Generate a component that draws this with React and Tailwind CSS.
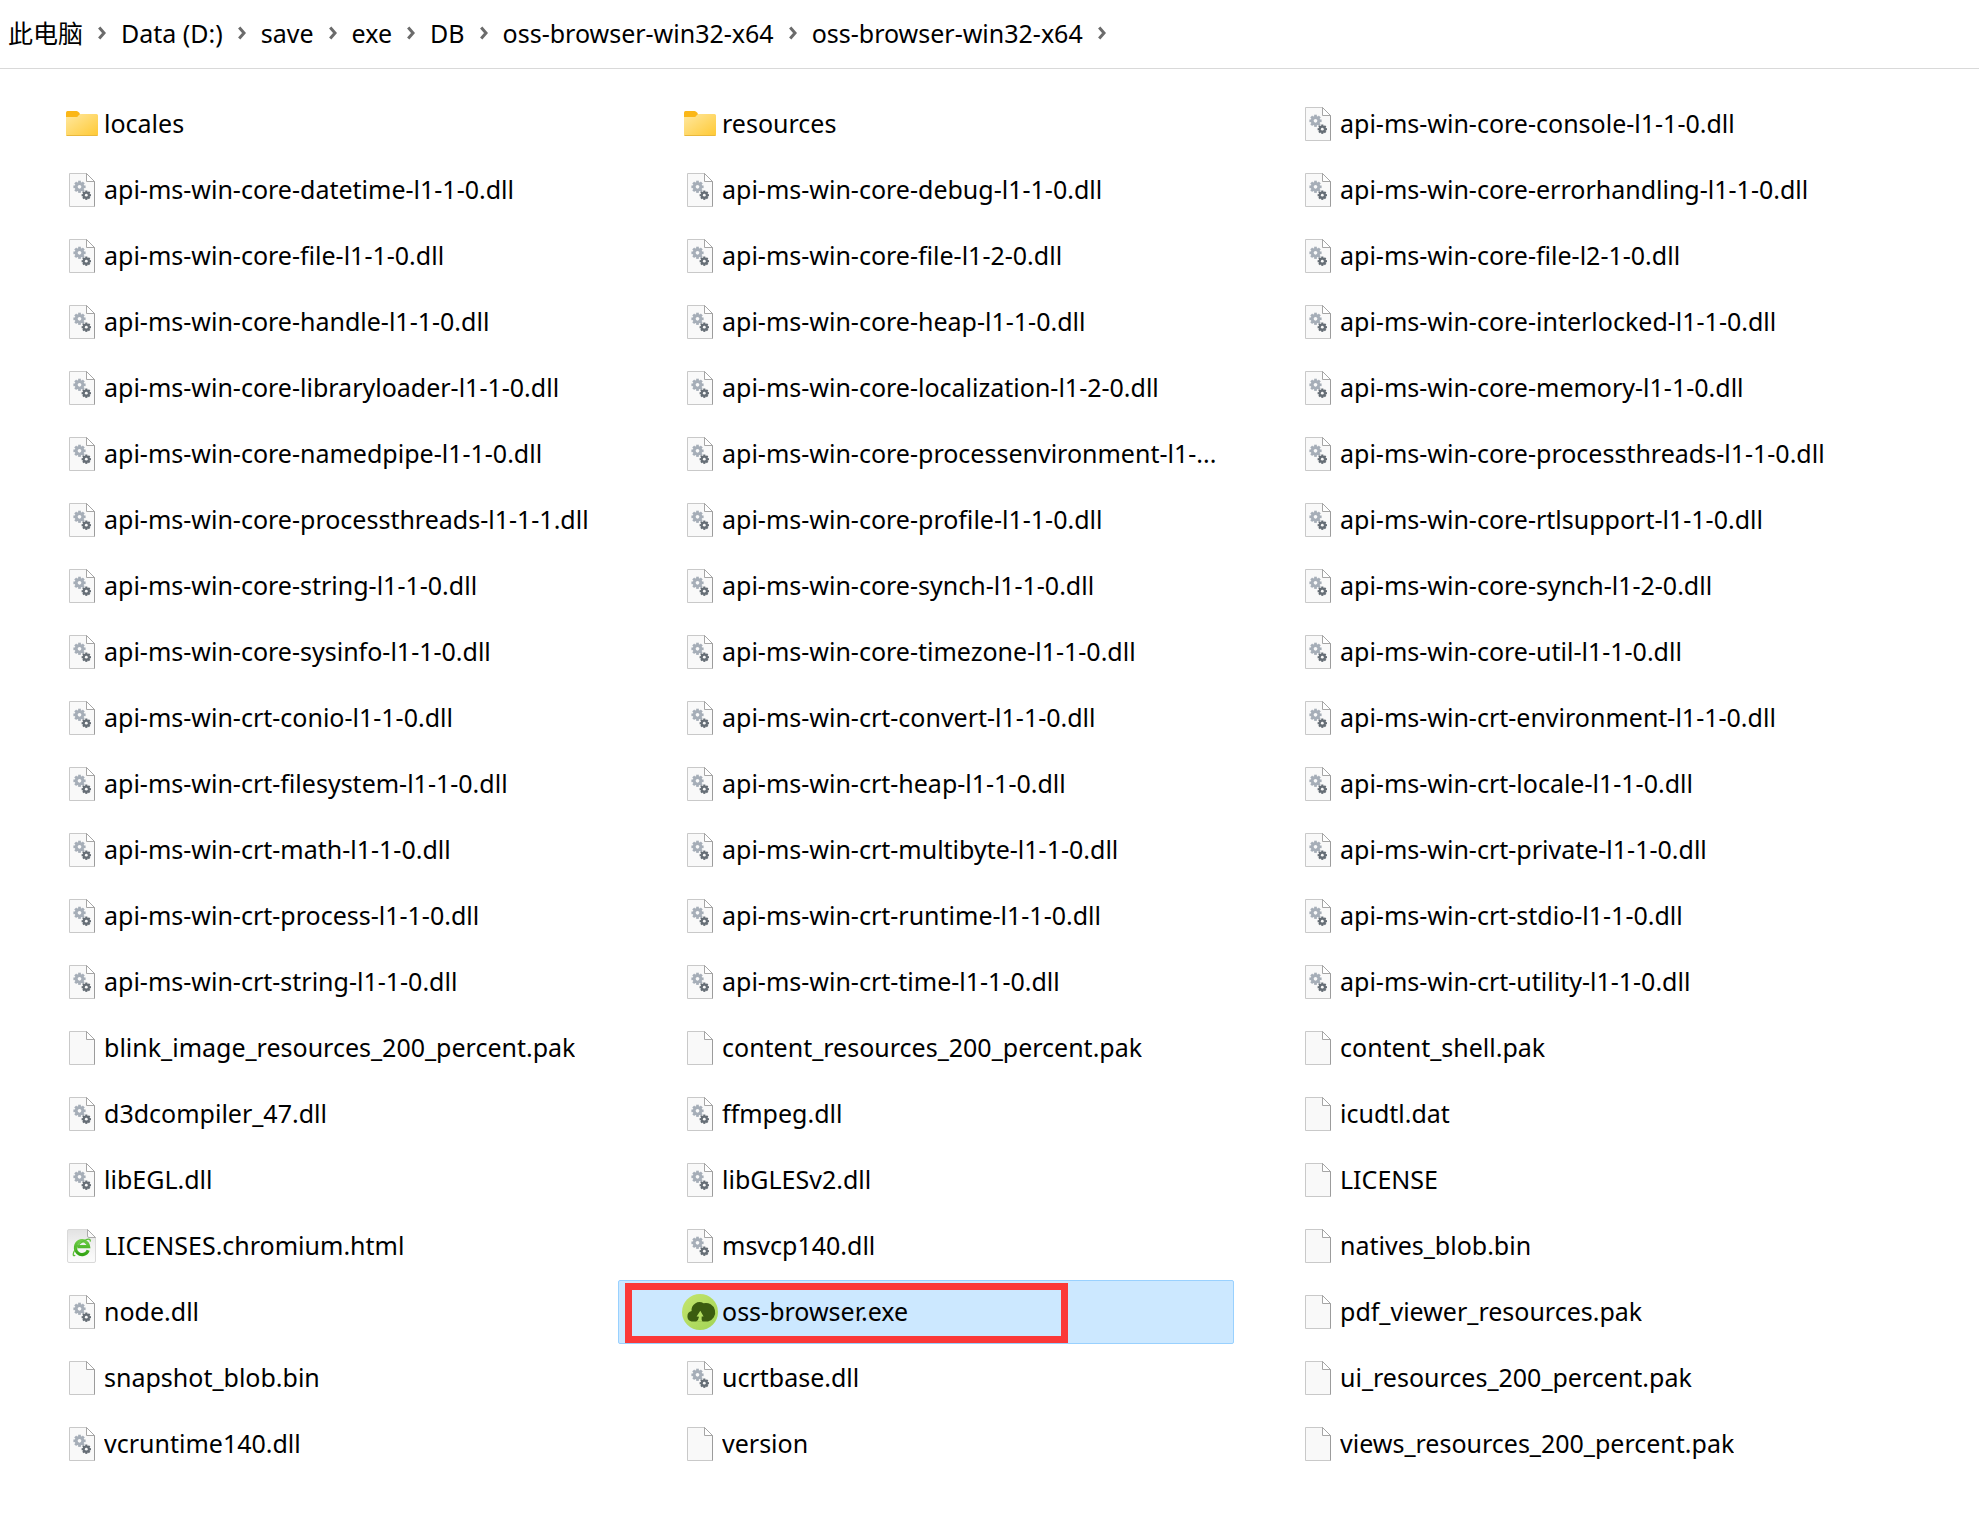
import React from "react";

const crumbs = [
  "此电脑",
  "Data (D:)",
  "save",
  "exe",
  "DB",
  "oss-browser-win32-x64",
  "oss-browser-win32-x64",
];

const api = (name) => ({ name: `api-ms-win-${name}`, kind: "dll" });
const dll = (name) => ({ name, kind: "dll" });
const page = (name) => ({ name, kind: "page" });

const files = [
  { name: "locales", kind: "folder" },
  { name: "resources", kind: "folder" },
  api("core-console-l1-1-0.dll"),
  api("core-datetime-l1-1-0.dll"),
  api("core-debug-l1-1-0.dll"),
  api("core-errorhandling-l1-1-0.dll"),
  api("core-file-l1-1-0.dll"),
  api("core-file-l1-2-0.dll"),
  api("core-file-l2-1-0.dll"),
  api("core-handle-l1-1-0.dll"),
  api("core-heap-l1-1-0.dll"),
  api("core-interlocked-l1-1-0.dll"),
  api("core-libraryloader-l1-1-0.dll"),
  api("core-localization-l1-2-0.dll"),
  api("core-memory-l1-1-0.dll"),
  api("core-namedpipe-l1-1-0.dll"),
  api("core-processenvironment-l1-..."),
  api("core-processthreads-l1-1-0.dll"),
  api("core-processthreads-l1-1-1.dll"),
  api("core-profile-l1-1-0.dll"),
  api("core-rtlsupport-l1-1-0.dll"),
  api("core-string-l1-1-0.dll"),
  api("core-synch-l1-1-0.dll"),
  api("core-synch-l1-2-0.dll"),
  api("core-sysinfo-l1-1-0.dll"),
  api("core-timezone-l1-1-0.dll"),
  api("core-util-l1-1-0.dll"),
  api("crt-conio-l1-1-0.dll"),
  api("crt-convert-l1-1-0.dll"),
  api("crt-environment-l1-1-0.dll"),
  api("crt-filesystem-l1-1-0.dll"),
  api("crt-heap-l1-1-0.dll"),
  api("crt-locale-l1-1-0.dll"),
  api("crt-math-l1-1-0.dll"),
  api("crt-multibyte-l1-1-0.dll"),
  api("crt-private-l1-1-0.dll"),
  api("crt-process-l1-1-0.dll"),
  api("crt-runtime-l1-1-0.dll"),
  api("crt-stdio-l1-1-0.dll"),
  api("crt-string-l1-1-0.dll"),
  api("crt-time-l1-1-0.dll"),
  api("crt-utility-l1-1-0.dll"),
  page("blink_image_resources_200_percent.pak"),
  page("content_resources_200_percent.pak"),
  page("content_shell.pak"),
  dll("d3dcompiler_47.dll"),
  dll("ffmpeg.dll"),
  page("icudtl.dat"),
  dll("libEGL.dll"),
  dll("libGLESv2.dll"),
  page("LICENSE"),
  { name: "LICENSES.chromium.html", kind: "html" },
  dll("msvcp140.dll"),
  page("natives_blob.bin"),
  dll("node.dll"),
  { name: "oss-browser.exe", kind: "oss", selected: true },
  page("pdf_viewer_resources.pak"),
  page("snapshot_blob.bin"),
  dll("ucrtbase.dll"),
  page("ui_resources_200_percent.pak"),
  dll("vcruntime140.dll"),
  page("version"),
  page("views_resources_200_percent.pak"),
];

function Sheet() {
  return (
    <>
      <path d="M5.5 1.5H22.5L30.5 9.5V34.5H5.5Z" fill="#f9f9f9" stroke="#c9c9c9" />
      <path d="M22.5 1.5L30.5 9.5V34.5" fill="none" stroke="#9c9c9c" />
      <path d="M22.5 1.5V9.5H30.5Z" fill="#fff" stroke="#a6a6a6" />
    </>
  );
}

function Gear({ cx, cy, r, color }) {
  return (
    <g transform={`translate(${cx} ${cy})`}>
      {[0, 45, 90, 135].map((a) => (
        <rect
          key={a}
          x={-r * 0.22}
          y={-r}
          width={r * 0.44}
          height={r * 2}
          fill={color}
          transform={`rotate(${a})`}
        />
      ))}
      <circle r={r * 0.78} fill={color} />
      <circle r={r * 0.3} fill="#f9f9f9" />
    </g>
  );
}

function FileIcon({ kind }) {
  return (
    <svg viewBox="0 0 36 36" className="size-9 shrink-0" aria-hidden="true">
      {kind === "folder" && (
        <>
          <defs>
            <linearGradient id="folderFace" x1="0" y1="0" x2="1" y2="1">
              <stop offset="0" stopColor="#ffe8a0" />
              <stop offset="1" stopColor="#ffc933" />
            </linearGradient>
          </defs>
          <path d="M2 6.5Q2 5 3.5 5H12.5Q14 5 15 6.5L16 8V12H2Z" fill="#fbb717" />
          <path d="M2 11H12.5Q13.5 11 14.5 9.5Q15.3 8 16.5 8H32.5Q34 8 34 9.5V28.5Q34 30 32.5 30H3.5Q2 30 2 28.5Z" fill="url(#folderFace)" />
          <path d="M2.5 29.5H33.5" stroke="#e9b83c" />
        </>
      )}
      {kind === "page" && <Sheet />}
      {kind === "dll" && (
        <>
          <Sheet />
          <Gear cx={15.5} cy={14.8} r={6.1} color="#a6aeb8" />
          <Gear cx={22.3} cy={23.2} r={4.7} color="#666e76" />
        </>
      )}
      {kind === "html" && (
        <>
          <defs>
            <linearGradient id="htmlSheet" x1="0" y1="0" x2="0" y2="1">
              <stop offset="0" stopColor="#e2e2e2" />
              <stop offset="0.5" stopColor="#f2f2f2" />
              <stop offset="1" stopColor="#fcfcfc" />
            </linearGradient>
            <linearGradient id="htmlRing" x1="0" y1="0" x2="0" y2="1">
              <stop offset="0" stopColor="#6ccc45" />
              <stop offset="1" stopColor="#34a514" />
            </linearGradient>
          </defs>
          <path d="M5 1.5H23.5L31.5 9.5V33Q31.5 34.5 30 34.5H5Q3.5 34.5 3.5 33V3Q3.5 1.5 5 1.5Z" fill="url(#htmlSheet)" stroke="#d9d9d9" />
          <path d="M23.5 1.5L31.5 9.5H25Q23.5 9.5 23.5 8Z" fill="#fafafa" stroke="#aaa" />
          <path d="M24.2 22.2A6.6 7 0 1 1 24.6 18.6H13.5" fill="none" stroke="url(#htmlRing)" strokeWidth="3.2" />
          <path d="M10.8 27.4C7.5 29 9.5 21 16 15.5C21 11.3 26.5 9.5 26.3 13" fill="none" stroke="#5cbf38" strokeWidth="1.3" strokeLinecap="round" />
        </>
      )}
      {kind === "oss" && (
        <>
          <defs>
            <linearGradient id="ossDisc" x1="0" y1="0" x2="1" y2="1">
              <stop offset="0" stopColor="#c4e56e" />
              <stop offset="1" stopColor="#a2d455" />
            </linearGradient>
          </defs>
          <circle cx="18" cy="18" r="18" fill="url(#ossDisc)" />
          <path d="M9.5 27.5A5.4 5.4 0 0 1 9.6 17A8 8 0 0 1 21.6 9.2A9.4 9.4 0 0 1 26 27.5Z" fill="#3b5c10" />
          <path d="M18.3 16.8L21.6 22.6H19.7L19.6 25.2Q19.7 26.6 20.6 27.8H14Q16.5 26.2 17 22.8L14.6 22.6Z" fill="#b4de61" />
        </>
      )}
    </svg>
  );
}

function Chevron() {
  return (
    <svg viewBox="0 0 8 14" className="mx-[15px] h-3.5 w-2 shrink-0" aria-hidden="true">
      <path d="M1.2 1.6L6 7L1.2 12.4" fill="none" stroke="#6b6b6b" strokeWidth="3" />
    </svg>
  );
}

export default function App() {
  return (
    <div className="min-h-screen bg-white text-[25px] leading-9 text-black [font-family:'Noto_Sans','Noto_Sans_CJK_SC',sans-serif]">
      <nav aria-label="Path" className="border-b border-[#d9d9d9] px-2 pt-[15px] pb-[17px]">
        <ol className="flex items-center">
          {crumbs.map((name, i) => (
            <li key={i} className="flex items-center whitespace-nowrap">
              <button type="button">{name}</button>
              <Chevron />
            </li>
          ))}
        </ol>
      </nav>
      <main className="pt-[23px] pr-[127px] pb-12">
        <ul className="grid grid-cols-3 gap-0.5">
          {files.map(({ name, kind, selected }) => (
            <li key={name} className="relative min-w-0">
              <button
                type="button"
                aria-pressed={Boolean(selected)}
                className={`flex h-16 w-full items-center gap-1 rounded-xs border pr-3 pl-[63px] text-left ${
                  selected ? "border-[#99d1ff] bg-[#cce8ff]" : "border-transparent"
                }`}
              >
                <FileIcon kind={kind} />
                <span className="truncate pb-0.5">{name}</span>
              </button>
              {selected && (
                <span className="pointer-events-none absolute top-[3px] left-[7px] h-[60px] w-[443px] border-[7px] border-[#fb3838]" />
              )}
            </li>
          ))}
        </ul>
      </main>
    </div>
  );
}
